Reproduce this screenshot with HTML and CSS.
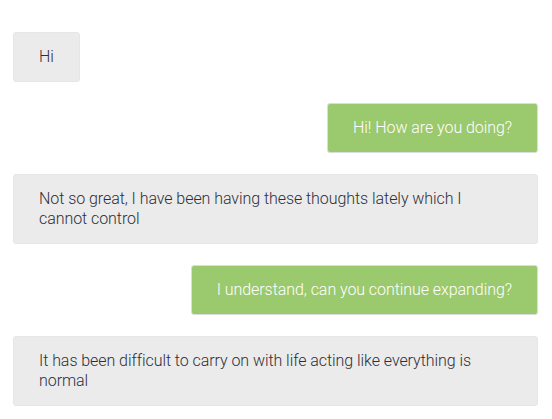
FILE: index.html
```html
<!DOCTYPE html>
<html>
<head>
<meta charset="utf-8">
<link rel="stylesheet" href="styles.css">
</head>
<body>
<div class="chat">
  <div class="msg them">Hi</div>
  <div class="msg me">Hi! How are you doing?</div>
  <div class="msg them wide">Not so great, I have been having these thoughts lately which I cannot control</div>
  <div class="msg me">I understand, can you continue expanding?</div>
  <div class="msg them wide">It has been difficult to carry on with life acting like everything is normal</div>
</div>
</body>
</html>
```
FILE: styles.css
```css
html, body {
  margin: 0;
  padding: 0;
  background: #ffffff;
}
.chat {
  display: flex;
  flex-direction: column;
  gap: 21px;
  padding: 32px 14px 0 13px;
  font-family: Roboto, "Noto Sans", sans-serif;
  font-weight: 300;
  font-size: 16px;
  line-height: 20px;
  letter-spacing: -0.06px;
}
.msg {
  padding: 14px 25px;
  border-radius: 3px;
  border: 1px solid transparent;
}
.them {
  align-self: flex-start;
  background: #ebebeb;
  border-color: #e6e6e6;
  color: #2e2e38;
}
.wide {
  align-self: stretch;
}
.me {
  align-self: flex-end;
  background: #9bc96d;
  border-color: #dcdcdc;
  color: #ffffff;
}
```
